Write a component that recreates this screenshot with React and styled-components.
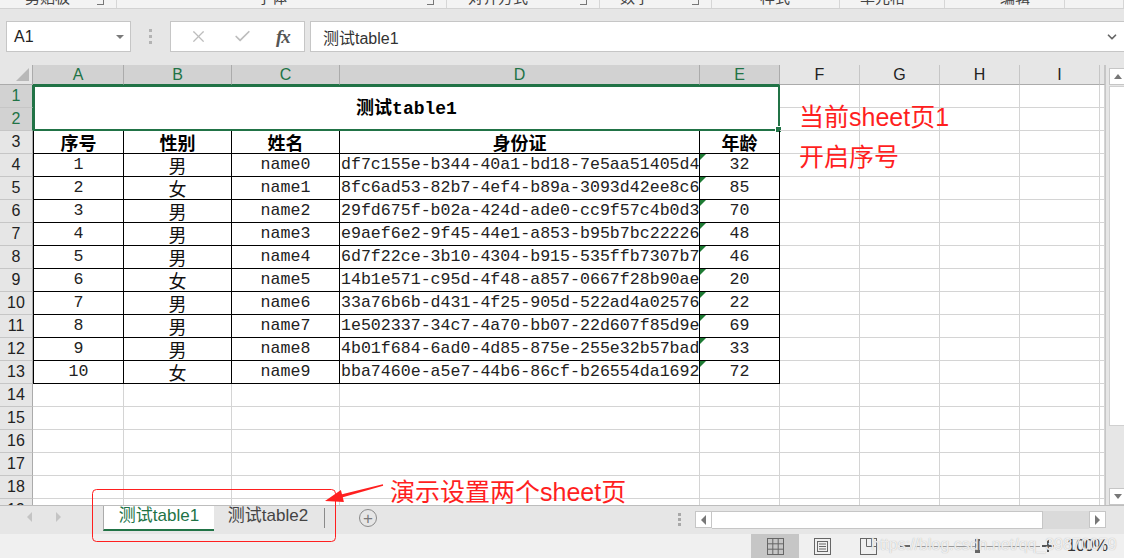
import React from 'react'
import styled, { createGlobalStyle } from 'styled-components'
import { X, Check, ChevronDown } from 'lucide-react'

const GREEN = '#217346'
const RED = '#ff1f1f'
const GRID = '#d4d4d4'
const UI_FONT = '"Liberation Sans", "Noto Sans CJK SC", sans-serif'
const MONO = '"Liberation Mono", "Noto Sans CJK SC", monospace'
const CJK = '"Noto Sans CJK SC", sans-serif'

const GlobalStyle = createGlobalStyle`
  html, body { margin: 0; padding: 0; }
  body {
    width: 1124px;
    height: 558px;
    overflow: hidden;
    background: #fff;
    font-family: ${UI_FONT};
  }
`

// Data
const ribbonGroups = [
  { label: '剪贴板', w: 117, x: 25, launch: true },
  { label: '字体', w: 330, x: 140, launch: true },
  { label: '对齐方式', w: 153, x: 21, launch: true },
  { label: '数字', w: 112, x: 20, launch: true },
  { label: '样式', w: 128, x: 48 },
  { label: '单元格', w: 105, x: 20 },
  { label: '编辑', w: 120, x: 55 },
  { label: '', w: 59, x: 0 },
]

const cols = [
  { id: 'A', w: 91, sel: true },
  { id: 'B', w: 108, sel: true },
  { id: 'C', w: 108, sel: true },
  { id: 'D', w: 360, sel: true },
  { id: 'E', w: 80, sel: true },
  { id: 'F', w: 80 },
  { id: 'G', w: 80 },
  { id: 'H', w: 80 },
  { id: 'I', w: 80 },
  { id: '', w: 5 },
]

const people = [
  ['1', '男', 'name0', 'df7c155e-b344-40a1-bd18-7e5aa51405d4', '32'],
  ['2', '女', 'name1', '8fc6ad53-82b7-4ef4-b89a-3093d42ee8c6', '85'],
  ['3', '男', 'name2', '29fd675f-b02a-424d-ade0-cc9f57c4b0d3', '70'],
  ['4', '男', 'name3', 'e9aef6e2-9f45-44e1-a853-b95b7bc22226', '48'],
  ['5', '男', 'name4', '6d7f22ce-3b10-4304-b915-535ffb7307b7', '46'],
  ['6', '女', 'name5', '14b1e571-c95d-4f48-a857-0667f28b90ae', '20'],
  ['7', '男', 'name6', '33a76b6b-d431-4f25-905d-522ad4a02576', '22'],
  ['8', '男', 'name7', '1e502337-34c7-4a70-bb07-22d607f85d9e', '69'],
  ['9', '男', 'name8', '4b01f684-6ad0-4d85-875e-255e32b57bad', '33'],
  ['10', '女', 'name9', 'bba7460e-a5e7-44b6-86cf-b26554da1692', '72'],
]

const headers = ['序号', '性别', '姓名', '身份证', '年龄']

// Window
const Window = styled.div`
  position: relative;
  width: 1124px;
  height: 558px;
  display: flex;
  flex-direction: column;
  overflow: hidden;
  background: #e6e6e6;
`

// Ribbon (cut off at the top)
const Ribbon = styled.div`
  display: flex;
  height: 8px;
  overflow: hidden;
  background: #f3f3f3;
  border-bottom: 1px solid #d2d2d2;
`

const RibbonGroup = styled.div`
  position: relative;
  flex: 0 0 ${p => p.$w}px;
  box-sizing: border-box;
  border-right: 1px solid #d6d6d6;
  height: 8px;
`

const RibbonLabel = styled.span`
  position: absolute;
  left: ${p => p.$x}px;
  top: -12px;
  font-size: 15px;
  line-height: 20px;
  color: #444;
  white-space: nowrap;
`

const Launcher = styled.span`
  position: absolute;
  right: 12px;
  top: -4px;
  width: 6px;
  height: 8px;
  border-right: 1px solid #777;
  border-bottom: 1px solid #777;
`

// Formula bar
const FormulaArea = styled.div`
  display: flex;
  align-items: flex-start;
  height: 56px;
  box-sizing: border-box;
  padding: 12px 0 0 6px;
  background: #e6e6e6;
`

const Box = styled.div`
  display: flex;
  align-items: center;
  height: 31px;
  box-sizing: border-box;
  background: #fff;
  border: 1px solid #c6c6c6;
`

const NameBox = styled(Box)`
  width: 125px;
  padding: 0 6px 0 7px;
  justify-content: space-between;
  font-size: 16px;
  color: #222;
`

const SmallTriangle = styled.span`
  width: 0;
  height: 0;
  border-left: 4px solid transparent;
  border-right: 4px solid transparent;
  border-top: 4px solid #7a7a7a;
`

const Grip = styled.div`
  width: 39px;
  height: 31px;
  display: flex;
  flex-direction: column;
  align-items: center;
  justify-content: center;
  gap: 3px;
  span {
    width: 3px;
    height: 3px;
    background: #b3b3b3;
  }
`

const ActionBox = styled(Box)`
  width: 135px;
  justify-content: space-around;
  padding: 0 2px 0 6px;
  margin-right: 5px;
`

const Fx = styled.span`
  font-family: "Liberation Serif", serif;
  font-style: italic;
  font-weight: bold;
  font-size: 19px;
  color: #555;
  letter-spacing: -1px;
`

const FormulaBox = styled(Box)`
  flex: 1;
  margin-right: -2px;
  padding: 0 6px 0 12px;
  justify-content: space-between;
  font-size: 16px;
  color: #333;
`

// Sheet
const SheetArea = styled.div`
  display: flex;
  height: 440px;
  background: #fff;
`

const Grid = styled.div`
  display: grid;
  grid-template-columns: 33px ${cols.map(c => c.w + 'px').join(' ')};
  grid-template-rows: 20px repeat(19, 23px);
  width: 1106px;
  height: 440px;
  box-sizing: border-box;
  border-right: 1px solid #c6c6c6;
  overflow: hidden;
  background: #fff;
`

const Corner = styled.div`
  position: relative;
  background: #e6e6e6;
  border-right: 1px solid #ababab;
  border-bottom: 1px solid #ababab;
  &::after {
    content: '';
    position: absolute;
    right: 3px;
    bottom: 3px;
    width: 13px;
    height: 13px;
    background: #b8b8b8;
    clip-path: polygon(100% 0, 100% 100%, 0 100%);
  }
`

const ColHead = styled.div`
  display: flex;
  align-items: center;
  justify-content: center;
  background: ${p => (p.$sel ? '#d2d2d2' : '#e6e6e6')};
  color: ${p => (p.$sel ? GREEN : '#222')};
  border-right: 1px solid ${p => (p.$sel ? '#ababab' : '#c6c6c6')};
  border-bottom: 1px solid ${p => (p.$sel ? GREEN : '#ababab')};
  font-size: 16px;
  overflow: hidden;
`

const RowHead = styled.div`
  display: flex;
  align-items: center;
  justify-content: center;
  background: ${p => (p.$sel ? '#d2d2d2' : '#e6e6e6')};
  color: ${p => (p.$sel ? GREEN : '#222')};
  border-right: 1px solid ${p => (p.$sel ? GREEN : '#ababab')};
  border-bottom: 1px solid #c6c6c6;
  font-size: 16px;
  line-height: 1;
`

const fontStyles = {
  mono: `font-family: ${MONO}; font-size: 16.6px; color: #222;`,
  cjk: `font-family: ${CJK}; font-size: 18px; color: #111;`,
  head: `font-family: ${CJK}; font-size: 18px; font-weight: bold; color: #000;`,
}

const Cell = styled.div`
  position: relative;
  display: flex;
  align-items: center;
  justify-content: ${p => (p.$left ? 'flex-start' : 'center')};
  padding-left: ${p => (p.$left ? '1px' : '0')};
  box-sizing: border-box;
  border-right: 1px solid ${p => (p.$boxed ? '#000' : GRID)};
  border-bottom: 1px solid ${p => (p.$boxed ? '#000' : GRID)};
  border-left: ${p => (p.$first ? '1px solid #000' : '0')};
  white-space: nowrap;
  overflow: hidden;
  line-height: 1;
  ${p => fontStyles[p.$font] || ''}

  ${p =>
    p.$flag &&
    `&::before {
      content: '';
      position: absolute;
      left: 0;
      top: 0;
      border-top: 6px solid #1e7b34;
      border-right: 6px solid transparent;
    }`}
`

const TitleCell = styled.div`
  position: relative;
  grid-column: 2 / span 5;
  grid-row: 2 / span 2;
  display: flex;
  align-items: center;
  justify-content: center;
  box-sizing: border-box;
  border: 2px solid ${GREEN};
  padding-top: 1px;
  font-family: ${MONO};
  font-weight: bold;
  font-size: 18px;
  line-height: 1;
  color: #000;
  &::after {
    content: '';
    position: absolute;
    right: -4px;
    bottom: -4px;
    width: 5px;
    height: 5px;
    background: ${GREEN};
    border: 1px solid #fff;
  }
`

// Vertical scrollbar
const VScroll = styled.div`
  display: flex;
  flex-direction: column;
  width: 18px;
  padding: 3px 0 0 3px;
  box-sizing: border-box;
  background: #e6e6e6;
  overflow: hidden;
`

const ScrollBtn = styled.div`
  flex: 0 0 auto;
  display: flex;
  align-items: center;
  justify-content: center;
  width: 17px;
  height: 17px;
  box-sizing: border-box;
  background: #fff;
  border: 1px solid #c6c6c6;
`

const arrowShapes = {
  up: c => `border-left: 4px solid transparent; border-right: 4px solid transparent; border-bottom: 5px solid ${c};`,
  down: c => `border-left: 4px solid transparent; border-right: 4px solid transparent; border-top: 5px solid ${c};`,
  left: c => `border-top: 5px solid transparent; border-bottom: 5px solid transparent; border-right: 5px solid ${c};`,
  right: c => `border-top: 5px solid transparent; border-bottom: 5px solid transparent; border-left: 5px solid ${c};`,
}

const Arrow = styled.span`
  width: 0;
  height: 0;
  ${p => arrowShapes[p.$dir](p.$light ? '#c4c4c4' : '#777')}
`

const VThumb = styled.div`
  height: 340px;
  width: 17px;
  margin-top: 1px;
  box-sizing: border-box;
  background: #fff;
  border: 1px solid #d0d0d0;
`

const Spacer = styled.div`
  flex: 1;
`

// Sheet tabs
const TabBar = styled.div`
  display: flex;
  align-items: flex-start;
  height: 29px;
  box-sizing: border-box;
  border-top: 1px solid #bdbdbd;
  background: #e6e6e6;
`

const NavArrows = styled.div`
  display: flex;
  align-items: center;
  gap: 24px;
  width: 90px;
  height: 22px;
  padding-left: 27px;
  box-sizing: border-box;
`

const Tab = styled.div`
  display: flex;
  align-items: center;
  justify-content: center;
  width: ${p => p.$w}px;
  height: 25px;
  padding-bottom: 4px;
  box-sizing: border-box;
  font-size: 17px;
  line-height: 1;
  color: ${p => (p.$active ? GREEN : '#444')};
  background: ${p => (p.$active ? '#fff' : 'transparent')};
  border-left: ${p => (p.$active ? '1px solid #ababab' : '0')};
  border-bottom: 2px solid ${p => (p.$active ? GREEN : 'transparent')};
  margin-left: ${p => p.$ml || 0}px;
`

const TabDivider = styled.div`
  width: 1px;
  height: 20px;
  margin: 2px 0 0 2px;
  background: #8a8a8a;
`

const AddSheet = styled.div`
  display: flex;
  align-items: center;
  justify-content: center;
  width: 18px;
  height: 18px;
  margin: 3px 0 0 34px;
  box-sizing: border-box;
  border: 1.5px solid #8a8a8a;
  border-radius: 50%;
  color: #7a7a7a;
  font-size: 17px;
  line-height: 1;
`

const VDots = styled.div`
  display: flex;
  flex-direction: column;
  gap: 2px;
  margin: 7px 14px 0 0;
  span {
    width: 3px;
    height: 3px;
    background: #a8a8a8;
  }
`

const HScroll = styled.div`
  display: flex;
  width: 411px;
  height: 18px;
  margin: 5px 18px 0 0;
`

const HThumb = styled.div`
  flex: 0 0 331px;
  box-sizing: border-box;
  background: #fff;
  border: 1px solid #c6c6c6;
  border-left: 0;
`

const HTrack = styled.div`
  flex: 1;
  background: #dadada;
`

// Status bar
const StatusBar = styled.div`
  display: flex;
  align-items: center;
  height: 24px;
  background: #f0f0f0;
`

const ViewBtn = styled.div`
  display: flex;
  align-items: center;
  justify-content: center;
  width: ${p => p.$w}px;
  height: 24px;
  background: ${p => (p.$active ? '#c6c6c6' : 'transparent')};
  margin-left: ${p => (p.$first ? 'auto' : '0')};
`

const ZoomMinus = styled.div`
  width: 10px;
  height: 2px;
  margin-left: 9px;
  background: #666;
`

const Slider = styled.div`
  position: relative;
  width: 125px;
  height: 1px;
  margin-left: 5px;
  background: #9a9a9a;
`

const SliderThumb = styled.div`
  position: absolute;
  left: 60px;
  top: -7px;
  width: 5px;
  height: 14px;
  background: #666;
`

const ZoomPlus = styled.div`
  position: relative;
  width: 12px;
  height: 12px;
  margin-left: 2px;
  &::before,
  &::after {
    content: '';
    position: absolute;
    background: #555;
  }
  &::before { left: 0; top: 5px; width: 12px; height: 2px; }
  &::after { left: 5px; top: 0; width: 2px; height: 12px; }
`

const Percent = styled.div`
  width: 40px;
  margin: 0 17px 0 13px;
  font-size: 16px;
  color: #333;
`

// Annotations laid over the sheet
const Note = styled.div`
  position: absolute;
  left: ${p => p.$x}px;
  top: ${p => p.$y}px;
  font-family: ${UI_FONT};
  font-size: 25px;
  line-height: 28px;
  color: ${RED};
  white-space: nowrap;
`

const Watermark = styled.div`
  position: absolute;
  left: 871px;
  top: 535px;
  font-family: "Liberation Sans", sans-serif;
  font-size: 16px;
  line-height: 20px;
  color: rgba(255, 255, 255, 0.8);
  text-shadow: 0 0 1px #a8a8a8;
  white-space: nowrap;
`

const Overlay = styled.svg`
  position: absolute;
  left: 0;
  top: 0;
  pointer-events: none;
`

const NormalIcon = () => (
  <svg width="17" height="17" viewBox="0 0 17 17" fill="none" stroke="#666" strokeWidth="1">
    <rect x="0.5" y="0.5" width="16" height="16" />
    <path d="M5.8 0.5v16M11.2 0.5v16M0.5 5.8h16M0.5 11.2h16" />
  </svg>
)

const LayoutIcon = () => (
  <svg width="17" height="17" viewBox="0 0 17 17" fill="none" stroke="#666" strokeWidth="1">
    <rect x="0.5" y="0.5" width="16" height="16" />
    <rect x="3.5" y="3.5" width="10" height="10" />
    <path d="M5 6h7M5 8.5h7M5 11h7" />
  </svg>
)

const BreakIcon = () => (
  <svg width="17" height="17" viewBox="0 0 17 17" fill="none" stroke="#666" strokeWidth="1">
    <rect x="0.5" y="0.5" width="16" height="16" />
    <path d="M6.5 0.5v8h10M11.5 0.5v8" />
  </svg>
)

const emptyCells = (from, key) =>
  cols.slice(from).map((c, i) => <Cell key={`${key}-${from + i}`} />)

const App = () => {
  const cells = []
  cells.push(<Corner key="corner" />)
  cols.forEach((c, i) =>
    cells.push(
      <ColHead key={`ch-${i}`} $sel={c.sel}>
        {c.id}
      </ColHead>
    )
  )

  // rows 1 and 2: merged title
  cells.push(<RowHead key="rh1" $sel>1</RowHead>)
  cells.push(<TitleCell key="title">测试table1</TitleCell>)
  cells.push(...emptyCells(5, 'r1'))
  cells.push(<RowHead key="rh2" $sel>2</RowHead>)
  cells.push(...emptyCells(5, 'r2'))

  // row 3: headers
  cells.push(<RowHead key="rh3">3</RowHead>)
  headers.forEach((h, i) =>
    cells.push(
      <Cell key={`h-${i}`} $boxed $first={i === 0} $font="head">
        {h}
      </Cell>
    )
  )
  cells.push(...emptyCells(5, 'r3'))

  // rows 4-13: data
  people.forEach((p, r) => {
    cells.push(<RowHead key={`rh${r + 4}`}>{r + 4}</RowHead>)
    cells.push(<Cell key={`a${r}`} $boxed $first $font="mono">{p[0]}</Cell>)
    cells.push(<Cell key={`b${r}`} $boxed $font="cjk">{p[1]}</Cell>)
    cells.push(<Cell key={`c${r}`} $boxed $font="mono">{p[2]}</Cell>)
    cells.push(<Cell key={`d${r}`} $boxed $left $font="mono">{p[3]}</Cell>)
    cells.push(<Cell key={`e${r}`} $boxed $flag $font="mono">{p[4]}</Cell>)
    cells.push(...emptyCells(5, `r${r + 4}`))
  })

  // rows 14-19: empty
  for (let r = 14; r <= 19; r++) {
    cells.push(<RowHead key={`rh${r}`}>{r}</RowHead>)
    cells.push(...emptyCells(0, `r${r}`))
  }

  return (
    <>
      <GlobalStyle />
      <Window>
        <Ribbon>
          {ribbonGroups.map((g, i) => (
            <RibbonGroup key={i} $w={g.w}>
              <RibbonLabel $x={g.x}>{g.label}</RibbonLabel>
              {g.launch && <Launcher />}
            </RibbonGroup>
          ))}
        </Ribbon>

        <FormulaArea>
          <NameBox>
            A1
            <SmallTriangle />
          </NameBox>
          <Grip>
            <span />
            <span />
            <span />
          </Grip>
          <ActionBox>
            <X size={19} color="#bdbdbd" strokeWidth={1.5} />
            <Check size={19} color="#bdbdbd" strokeWidth={2.2} />
            <Fx>fx</Fx>
          </ActionBox>
          <FormulaBox>
            测试table1
            <ChevronDown size={14} color="#666" strokeWidth={3} />
          </FormulaBox>
        </FormulaArea>

        <SheetArea>
          <Grid>{cells}</Grid>
          <VScroll>
            <ScrollBtn>
              <Arrow $dir="up" />
            </ScrollBtn>
            <VThumb />
            <Spacer />
            <ScrollBtn>
              <Arrow $dir="down" />
            </ScrollBtn>
          </VScroll>
        </SheetArea>

        <TabBar>
          <NavArrows>
            <Arrow $dir="left" $light />
            <Arrow $dir="right" $light />
          </NavArrows>
          <Tab $active $w={111} $ml={13}>
            测试table1
          </Tab>
          <Tab $w={108}>测试table2</Tab>
          <TabDivider />
          <AddSheet>+</AddSheet>
          <Spacer />
          <VDots>
            <span />
            <span />
            <span />
          </VDots>
          <HScroll>
            <ScrollBtn>
              <Arrow $dir="left" />
            </ScrollBtn>
            <HThumb />
            <HTrack />
            <ScrollBtn>
              <Arrow $dir="right" />
            </ScrollBtn>
          </HScroll>
        </TabBar>

        <StatusBar>
          <ViewBtn $first $active $w={48}>
            <NormalIcon />
          </ViewBtn>
          <ViewBtn $w={46}>
            <LayoutIcon />
          </ViewBtn>
          <ViewBtn $w={46}>
            <BreakIcon />
          </ViewBtn>
          <ZoomMinus />
          <Slider>
            <SliderThumb />
          </Slider>
          <ZoomPlus />
          <Percent>100%</Percent>
        </StatusBar>

        <Note $x={799} $y={103}>当前sheet页1</Note>
        <Note $x={799} $y={143}>开启序号</Note>
        <Note $x={390} $y={478}>演示设置两个sheet页</Note>
        <Watermark>https://blog.csdn.net/qq_39870079</Watermark>

        <Overlay width="1124" height="558" viewBox="0 0 1124 558">
          <rect x="92.5" y="489.5" width="243" height="52" rx="4" fill="none" stroke={RED} strokeWidth="1" />
          <polygon
            fill={RED}
            points="325,501 340.9,489.9 342,494.2 382.85,484.2 383.15,485.8 342.8,497.2 343.9,502"
          />
        </Overlay>
      </Window>
    </>
  )
}

export default App
